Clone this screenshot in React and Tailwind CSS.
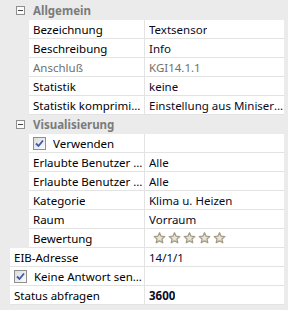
import React from "react";

const font = { fontFamily: '"Noto Sans", "Liberation Sans", sans-serif' };

function Minus() {
  return (
    <div className="w-[9px] h-[9px] border border-[#8e8e8e] bg-[#fafafa] flex items-center justify-center">
      <div className="w-[5px] h-px bg-[#444]" />
    </div>
  );
}

function Check() {
  return (
    <div className="w-[13px] h-[13px] border border-[#8f8f8f] bg-gradient-to-br from-[#dcdcdc] to-[#fbfbfb] flex items-center justify-center shrink-0">
      <svg width="9" height="9" viewBox="0 0 9 9">
        <path d="M1 4.5 L3.5 7 L8 1.5" fill="none" stroke="#3d58a8" strokeWidth="1.8" />
      </svg>
    </div>
  );
}

function Star() {
  return (
    <svg width="13" height="12" viewBox="0 0 13 12">
      <path
        d="M6.5 0.8 L8.1 4.2 L11.8 4.6 L9 7.1 L9.8 10.8 L6.5 8.9 L3.2 10.8 L4 7.1 L1.2 4.6 L4.9 4.2 Z"
        fill="#e7e3d8"
        stroke="#a49d86"
        strokeWidth="1.3"
        strokeLinejoin="round"
      />
    </svg>
  );
}

function Header({ title }) {
  return (
    <div className="h-[19px] flex items-center">
      <div className="ml-[16px] w-[17px]">
        <Minus />
      </div>
      <span className="font-bold text-[#7b7b7b]">{title}</span>
    </div>
  );
}

function Row({ indent = 29, label, value, labelGray, valueGray, bold, check, stars }) {
  const labelW = 145 - indent;
  return (
    <div className="h-[19px] flex">
      <div style={{ width: indent }} className="shrink-0" />
      <div
        style={{ width: labelW }}
        className="shrink-0 bg-white border-b border-r border-[#e3e3e3] flex items-center pl-[4px] overflow-hidden"
      >
        {check && (
          <span className="mr-[7px] flex">
            <Check />
          </span>
        )}
        <span className={"truncate " + (labelGray ? "text-[#6f6f6f]" : "text-black")}>{label}</span>
      </div>
      <div className="flex-1 min-w-0 bg-white border-b border-[#e3e3e3] flex items-center pl-[4px] overflow-hidden">
        {stars ? (
          <div className="flex gap-[2px] ml-[4px]">
            <Star />
            <Star />
            <Star />
            <Star />
            <Star />
          </div>
        ) : (
          <span
            className={
              "truncate " +
              (valueGray ? "text-[#6f6f6f]" : "text-[#0a0a1e]") +
              (bold ? " font-bold" : "")
            }
          >
            {value}
          </span>
        )}
      </div>
    </div>
  );
}

export default function App() {
  return (
    <div
      style={font}
      className="w-[288px] h-[310px] bg-[#ebebeb] pt-px pr-[4px] text-[11.5px] leading-[19px] overflow-hidden"
    >
      <Header title="Allgemein" />
      <Row label="Bezeichnung" value="Textsensor" />
      <Row label="Beschreibung" value="Info" />
      <Row label="Anschluß" value="KGI14.1.1" labelGray valueGray />
      <Row label="Statistik" value="keine" />
      <Row label="Statistik komprimiert" value="Einstellung aus Miniserver übernehmen" />
      <Header title="Visualisierung" />
      <Row label="Verwenden" value="" check />
      <Row label="Erlaubte Benutzer Intern" value="Alle" />
      <Row label="Erlaubte Benutzer Internet" value="Alle" />
      <Row label="Kategorie" value="Klima u. Heizen" />
      <Row label="Raum" value="Vorraum" />
      <Row label="Bewertung" stars />
      <Row indent={10} label="EIB-Adresse" value="14/1/1" />
      <Row indent={10} label="Keine Antwort senden" value="" check />
      <Row indent={10} label="Status abfragen" value="3600" bold />
    </div>
  );
}
